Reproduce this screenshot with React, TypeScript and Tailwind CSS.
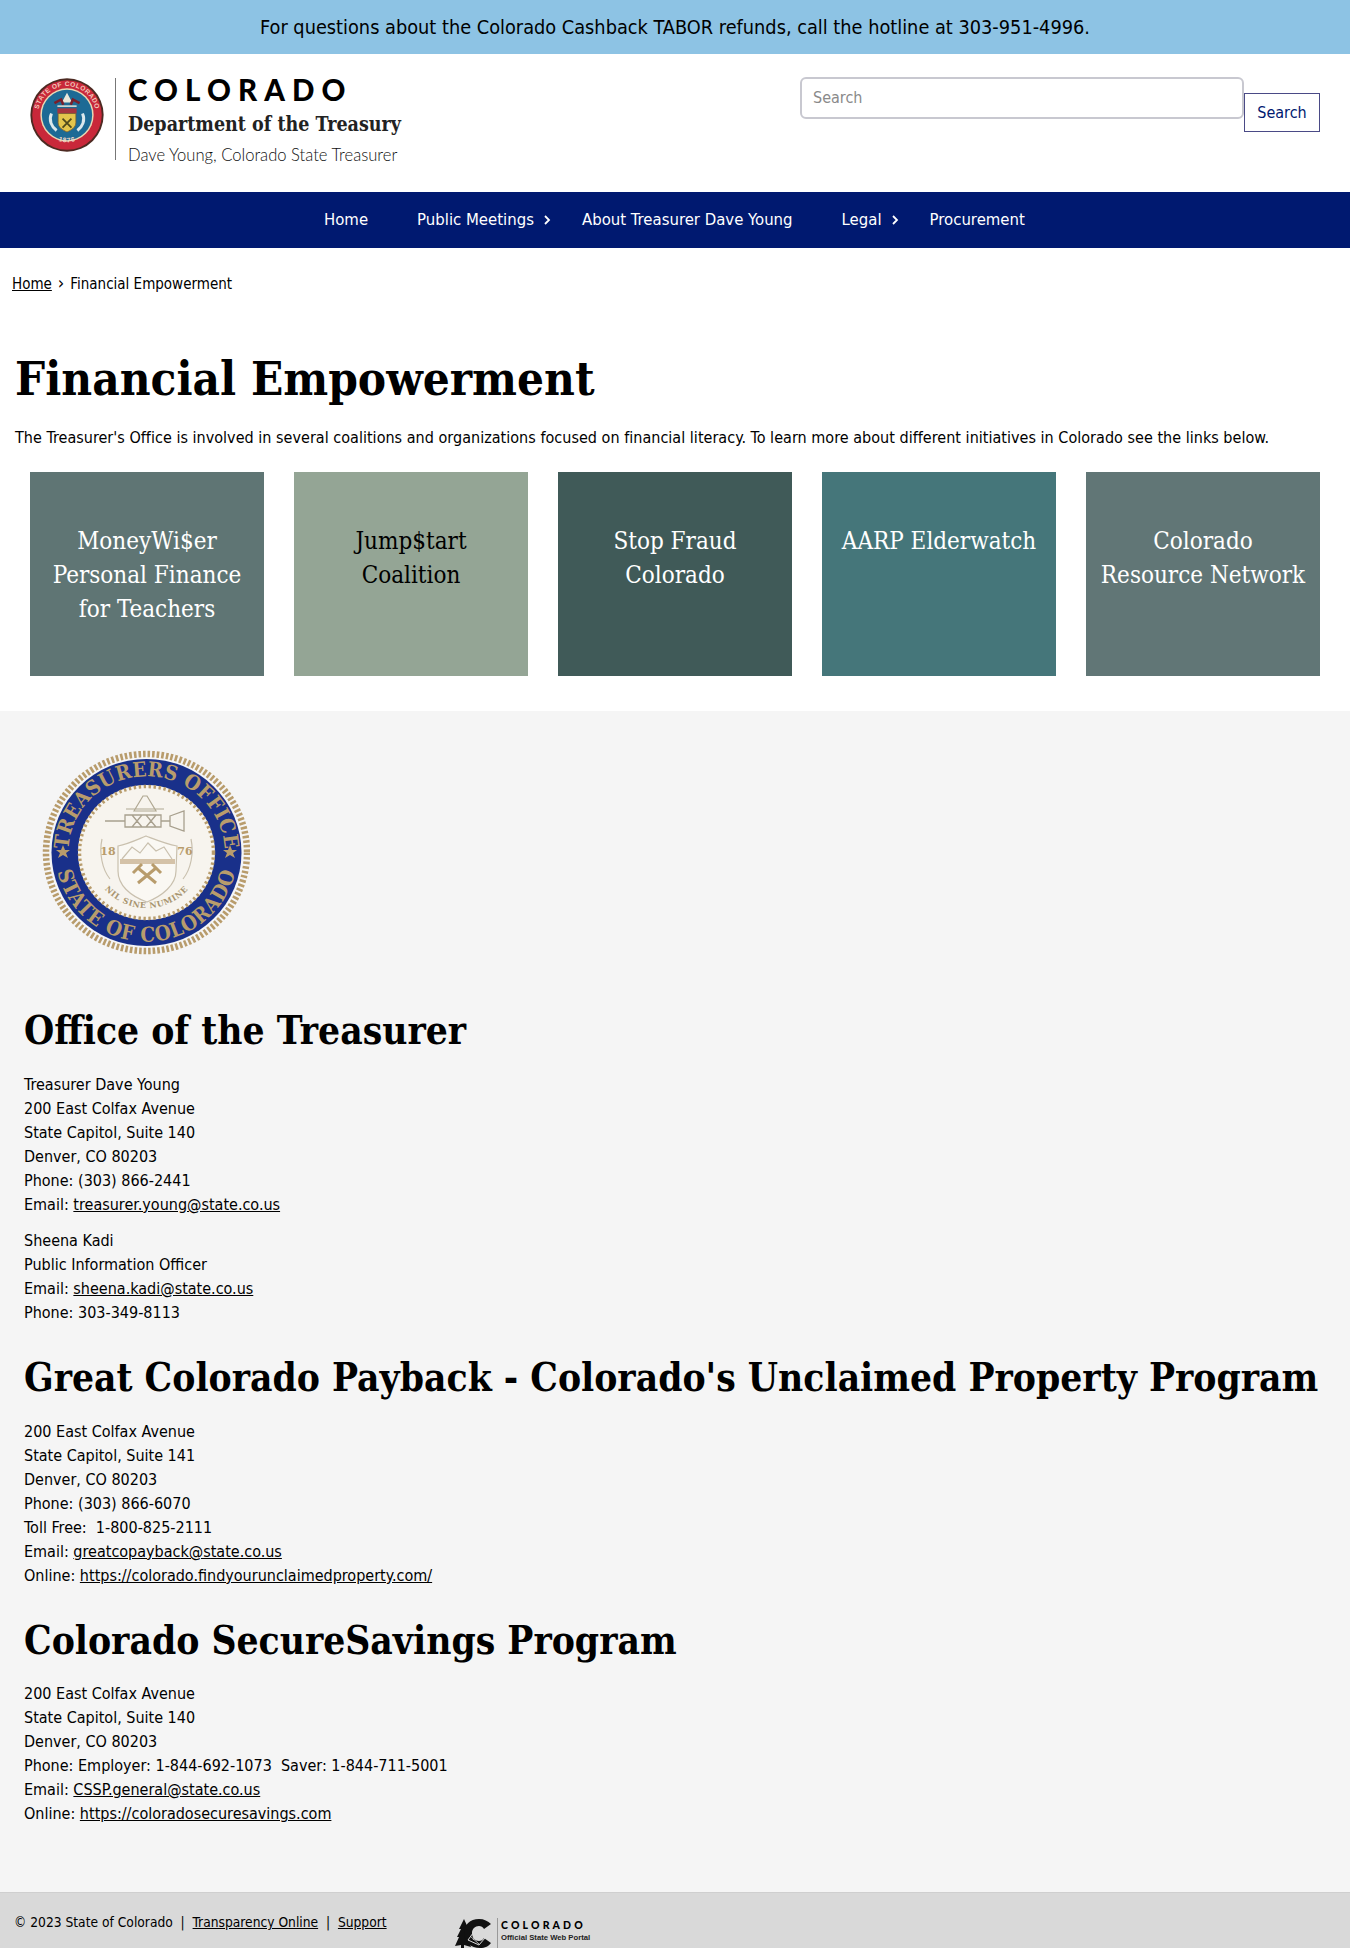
const BODY = "font-['DejaVu_Sans_Condensed','DejaVu_Sans',sans-serif]";

function HeaderSeal() {
  return (
    <svg viewBox="0 0 100 100" className="w-[74px] h-[74px] shrink-0">
      <defs>
        <path id="hs-top" d="M 11 50 a 39 39 0 0 1 78 0" />
        <path id="hs-bot" d="M 15 62 a 37 37 0 0 0 70 0" />
      </defs>
      <circle cx="50" cy="50" r="49.5" fill="#4d2a22" />
      <circle cx="50" cy="50" r="47" fill="#c9283a" />
      <circle cx="50" cy="50" r="36" fill="#e9d9b4" />
      <circle cx="50" cy="50" r="34" fill="#1d6a95" />
      <text fontSize="9" fill="#f2c9bb" fontFamily="Liberation Sans, sans-serif" fontWeight="700" letterSpacing="0.5">
        <textPath href="#hs-top" startOffset="50%" textAnchor="middle">STATE OF COLORADO</textPath>
      </text>
      <text fontSize="9" fill="#f2d9c8" fontFamily="Liberation Sans, sans-serif" fontWeight="700" letterSpacing="1">
        <textPath href="#hs-bot" startOffset="50%" textAnchor="middle">1876</textPath>
      </text>
      <path d="M50 20 l7 13 h-14 z" fill="#e8e6da" />
      <path d="M33 34 l9 -5 3 7 M67 34 l-9 -5 -3 7" stroke="#7b1e2a" strokeWidth="3.5" fill="none" />
      <path d="M37 38 h26" stroke="#e8e6da" strokeWidth="2" />
      <rect x="37" y="41" width="26" height="7" fill="#a5353f" />
      <path d="M38 48 h24 v12 c0 7 -6 10 -12 13 c-6 -3 -12 -6 -12 -13 z" fill="#e3c54c" stroke="#7a5a2a" strokeWidth="1" />
      <path d="M44 55 l12 12 M56 55 l-12 12" stroke="#4f4a1c" strokeWidth="2.4" />
      <path d="M29 48 c-4 9 0 18 7 23 M71 48 c4 9 0 18 -7 23" stroke="#dbe8ec" strokeWidth="4" fill="none" />
    </svg>
  );
}

function BigSeal() {
  const gold = "#b89c6c";
  const blue = "#19308a";
  const serif = "DejaVu Serif Condensed, DejaVu Serif, serif";
  return (
    <svg viewBox="0 0 208 208" className="w-[208px] h-[208px]">
      <defs>
        <path id="b-top" d="M 29.2 123.2 A 78 76 0 1 1 179.8 123.2" />
        <path id="b-bot" d="M 14.9 88 A 91 89 0 1 0 194.1 88" />
        <path id="b-motto" d="M 52 95 A 54 52 0 1 0 157 95" />
      </defs>
      <ellipse cx="104.5" cy="103.5" rx="100.5" ry="98.5" fill="none" stroke={gold} strokeWidth="6.5" strokeDasharray="2.6 2" />
      <ellipse cx="104.5" cy="103.5" rx="95" ry="93.5" fill={blue} />
      <ellipse cx="104.5" cy="103.5" rx="68.5" ry="67.5" fill="#f7f4ee" />
      <ellipse cx="104.5" cy="103.5" rx="67" ry="66" fill="none" stroke={gold} strokeWidth="3.5" strokeDasharray="2.4 2.6" />
      <text fontSize="20.5" fontWeight="700" fill={gold} fontFamily={serif} letterSpacing="0.3">
        <textPath href="#b-top" startOffset="50%" textAnchor="middle">TREASURERS OFFICE</textPath>
      </text>
      <text fontSize="20.5" fontWeight="700" fill={gold} fontFamily={serif} letterSpacing="0.8">
        <textPath href="#b-bot" startOffset="50%" textAnchor="middle">STATE OF COLORADO</textPath>
      </text>
      <path d="M21 96 l2 5 5 0 -4 3 2 5 -5 -3 -5 3 2 -5 -4 -3 5 0 z M188 96 l2 5 5 0 -4 3 2 5 -5 -3 -5 3 2 -5 -4 -3 5 0 z" fill={gold} />
      <path d="M63 72 h20 M83 66 h36 v12 h-36 z M90 66 l10 12 M100 66 l-10 12 M104 66 l10 12 M114 66 l-10 12 M119 72 h9 M128 67 l14 -5 v20 l-14 -5 z" fill="none" stroke="#a8a08e" strokeWidth="1.3" />
      <path d="M92 62 l9 -15 h4 l9 15 z M84 60 h38" fill="none" stroke="#b0a892" strokeWidth="1.2" />
      <path d="M76 97 c10 -2 16 -5 28 -10 c13 5 20 8 31 10 l-1 25 c0 14 -14 25 -29 31 c-17 -6 -29 -17 -29 -31 z" fill="#faf8f3" stroke="#c9c0ae" strokeWidth="1.2" />
      <path d="M60 90 c-3 14 0 30 8 40 M149 90 c3 14 0 30 -8 40" fill="none" stroke="#c9c0ae" strokeWidth="1.2" />
      <path d="M80 110 l10 -12 8 6 8 -10 8 8 8 -4 8 12" fill="none" stroke="#c9c0ae" strokeWidth="1.2" />
      <rect x="78" y="110" width="55" height="5" fill="#d4c2a8" />
      <text x="66" y="106" fontSize="11" fontWeight="700" fill={gold} fontFamily="DejaVu Serif, serif" textAnchor="middle">18</text>
      <text x="143" y="106" fontSize="11" fontWeight="700" fill={gold} fontFamily="DejaVu Serif, serif" textAnchor="middle">76</text>
      <path d="M96 119 l18 15 M114 119 l-18 15" stroke={gold} strokeWidth="3" fill="none" />
      <path d="M91 124 l9 -9 M119 124 l-9 -9" stroke={gold} strokeWidth="3" fill="none" />
      <text fontSize="8" fontWeight="700" fill="#a8946e" fontFamily="DejaVu Serif, serif" letterSpacing="0.6">
        <textPath href="#b-motto" startOffset="50%" textAnchor="middle">NIL SINE NUMINE</textPath>
      </text>
    </svg>
  );
}

function FooterLogo() {
  return (
    <div className="flex items-start ml-[59px] mt-[6px] shrink-0">
      <svg viewBox="0 0 36 30" className="w-[36px] h-[30px]">
        <path d="M9 1 L14 12 L12 12 L15 20 L13 20 L16 29 L9 27 L9 30 L6 30 L6 27 L0 28 L4 19 L2 19 L6 11 L4 11 Z" fill="#111" />
        <path d="M24 1 C15 1 9 7 9 15 C9 24 16 30 25 30 C30 30 34 28 36 25 L29 20 C28 22 26 23 24 23 C20 23 17 20 17 15 C17 11 20 8 24 8 C26 8 28 9 29 11 L36 6 C33 3 29 1 24 1 Z" fill="#111" />
        <path d="M13 22 L21 11 L30 20 L24 27 Z" stroke="#d9d9d9" strokeWidth="1" fill="none" />
        <path d="M18 22 L24 14 M15 18 l9 8" stroke="#d9d9d9" strokeWidth="0.8" fill="none" />
      </svg>
      <div className="ml-[6px] border-l border-[#999] pl-[3px] h-[30px]">
        <div className="font-['Lato',sans-serif] font-black text-[10.5px] leading-[12px] tracking-[0.3em] text-black mt-[1px]">COLORADO</div>
        <div className="font-['Liberation_Sans',sans-serif] font-bold text-[7.7px] leading-[10px] text-[#222] mt-[2px] whitespace-nowrap">Official State Web Portal</div>
      </div>
    </div>
  );
}

const H2 = "font-['DejaVu_Serif_Condensed','DejaVu_Serif',serif] font-bold text-[38.6px] leading-[48px] text-black";
const A = "underline text-black";

function Card({ lines, bg, dark }: { lines: string[]; bg: string; dark?: boolean }) {
  return (
    <div className={`${bg} h-[204px] pt-[52px] px-1 text-center font-['DejaVu_Serif_Condensed','DejaVu_Serif',serif] text-[24px] leading-[34px] ${dark ? "text-black" : "text-white"}`}>
      {lines.map((l) => (
        <div key={l}>{l}</div>
      ))}
    </div>
  );
}

function Chevron() {
  return (
    <svg viewBox="0 0 10 12" className="w-[10px] h-[12px] ml-[8px]" fill="none" stroke="white" strokeWidth="1.8">
      <path d="M3 2 L7 6 L3 10" />
    </svg>
  );
}

export default function App() {
  return (
    <div className={`w-[1350px] h-[1948px] overflow-hidden bg-white text-black ${BODY} text-[16px]`}>
      <div className="h-[54px] bg-[#8dc3e4] flex items-center justify-center pt-[1px] text-[19.75px]">
        For questions about the Colorado Cashback TABOR refunds, call the hotline at 303-951-4996.
      </div>

      <header className="h-[138px] flex justify-between">
        <div className="flex pl-[30px] pt-[24px]">
          <HeaderSeal />
          <div className="ml-[11px] pl-[12px] border-l border-[#777] h-[82px]">
            <div className="font-['Lato',sans-serif] font-black text-[29.5px] leading-[24px] tracking-[0.24em]">COLORADO</div>
            <div className="font-['DejaVu_Serif_Condensed','DejaVu_Serif',serif] font-bold text-[19.5px] leading-[28px] mt-[9px] text-[#222]">Department of the Treasury</div>
            <div className="font-['Lato',sans-serif] font-light text-[16.6px] leading-[20px] mt-[6px] text-[#111]">Dave Young, Colorado State Treasurer</div>
          </div>
        </div>
        <div className="flex items-start pt-[23px] pr-[30px]">
          <div className="w-[444px] h-[42px] border-2 border-[#c8c8d0] rounded-[6px] flex items-center px-[11px] text-[#8a8a8a]">Search</div>
          <div className="mt-[16px] w-[76px] h-[39px] border border-[#4a4a86] flex items-center justify-center text-[#001970]">Search</div>
        </div>
      </header>

      <nav className="h-[56px] bg-[#001970] text-white text-[16.6px] flex items-center pl-[324px]">
        <div>Home</div>
        <div className="ml-[49px] flex items-center">Public Meetings<Chevron /></div>
        <div className="ml-[30px]">About Treasurer Dave Young</div>
        <div className="ml-[49px] flex items-center">Legal<Chevron /></div>
        <div className="ml-[30px]">Procurement</div>
      </nav>

      <div className="pl-3 pt-[26px] h-[70px] text-[15px] leading-[20px]">
        <span className={A}>Home</span>
        <span className="mx-[6px] text-[18px] leading-[18px]">›</span>
        <span>Financial Empowerment</span>
      </div>

      <main className="h-[393px] px-[15px]">
        <h1 className="font-['DejaVu_Serif_Condensed','DejaVu_Serif',serif] font-bold text-[47.2px] leading-[58px] text-black pt-[32px] h-[90px] box-content">Financial Empowerment</h1>
        <p className="mt-[-14px] leading-[24px] whitespace-nowrap tracking-[0.025px]">The Treasurer's Office is involved in several coalitions and organizations focused on financial literacy. To learn more about different initiatives in Colorado see the links below.</p>
        <div className="grid grid-cols-5 gap-[30px] px-[15px] mt-[22px]">
          <Card bg="bg-[#5f7574]" lines={["MoneyWi$er", "Personal Finance", "for Teachers"]} />
          <Card bg="bg-[#94a595]" dark lines={["Jump$tart", "Coalition"]} />
          <Card bg="bg-[#405a58]" lines={["Stop Fraud", "Colorado"]} />
          <Card bg="bg-[#45767a]" lines={["AARP Elderwatch"]} />
          <Card bg="bg-[#617676]" lines={["Colorado", "Resource Network"]} />
        </div>
      </main>

      <section className="h-[1181px] bg-[#f5f5f5] px-[24px] pt-[38px]">
        <div className="ml-[18px]"><BigSeal /></div>
        <h2 className={`${H2} mt-[50px]`}>Office of the Treasurer</h2>
        <div className="leading-[24px] mt-[18px]">
          <p>Treasurer Dave Young<br />200 East Colfax Avenue<br />State Capitol, Suite 140<br />Denver, CO 80203<br />Phone: (303) 866-2441<br />Email: <span className={A}>treasurer.young@state.co.us</span></p>
          <p className="mt-[12px]">Sheena Kadi<br />Public Information Officer<br />Email: <span className={A}>sheena.kadi@state.co.us</span><br />Phone: 303-349-8113</p>
        </div>
        <h2 className={`${H2} mt-[29px] whitespace-nowrap`}>Great Colorado Payback - Colorado's Unclaimed Property Program</h2>
        <div className="leading-[24px] mt-[18px]">
          <p>200 East Colfax Avenue<br />State Capitol, Suite 141<br />Denver, CO 80203<br />Phone: (303) 866-6070<br />Toll Free:&nbsp; 1-800-825-2111<br />Email: <span className={A}>greatcopayback@state.co.us</span><br />Online: <span className={A}>https://colorado.findyourunclaimedproperty.com/</span></p>
        </div>
        <h2 className={`${H2} mt-[29px]`}>Colorado SecureSavings Program</h2>
        <div className="leading-[24px] mt-[17px]">
          <p>200 East Colfax Avenue<br />State Capitol, Suite 140<br />Denver, CO 80203<br />Phone: Employer: 1-844-692-1073&nbsp; Saver: 1-844-711-5001<br />Email: <span className={A}>CSSP.general@state.co.us</span><br />Online: <span className={A}>https://coloradosecuresavings.com</span></p>
        </div>
      </section>

      <footer className="h-[56px] bg-[#d9d9d9] border-t border-[#cfcfcf] flex items-start pl-[14px] pt-[19px] text-[13.7px] leading-[20px] overflow-hidden">
        <span className="w-[382px] shrink-0 whitespace-nowrap">© 2023 State of Colorado &nbsp;|&nbsp; <span className={A}>Transparency Online</span> &nbsp;|&nbsp; <span className={A}>Support</span></span>
        <FooterLogo />
      </footer>
    </div>
  );
}
